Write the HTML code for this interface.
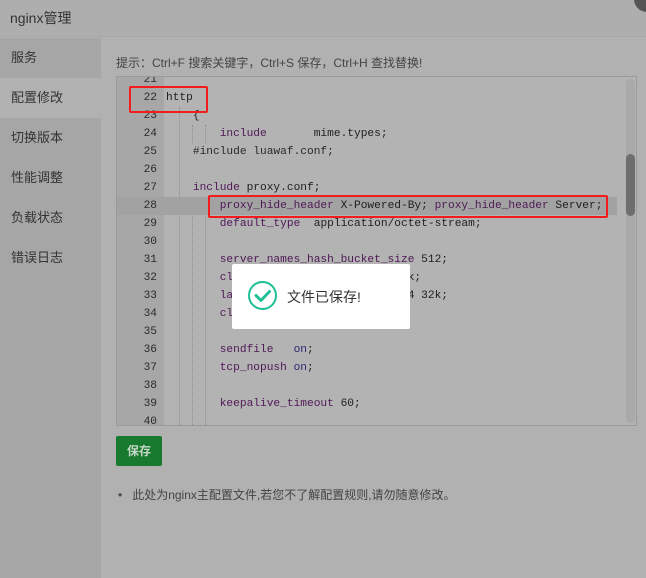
<!DOCTYPE html>
<html><head><meta charset="utf-8"><style>
*{margin:0;padding:0;box-sizing:border-box}
body{width:646px;height:578px;overflow:hidden;background:#b1b1b1;font-family:"Liberation Sans","Noto Sans CJK SC",sans-serif;position:relative;color:#333}
.title{position:absolute;left:0;top:0;width:646px;height:37px;background:#aeaeae;border-bottom:1px solid #a6a6a6;font-size:14px;line-height:36px;padding-left:10px;color:#333}
.close{position:absolute;left:634px;top:-14px;width:26px;height:26px;border-radius:50%;background:#555}
.side{position:absolute;left:0;top:38px;width:101px;height:540px;background:#a6a6a6}
.side div{height:40px;line-height:40px;padding-left:11px;font-size:13px;color:#333}
.side .act{background:#b1b1b1}
.tip{position:absolute;left:116px;top:54px;font-size:12px;color:#444}
.ed{position:absolute;left:116px;top:76px;width:521px;height:350px;border:1px solid #9a9a9a;background:#b3b3b3;overflow:hidden;font-family:"Liberation Mono",monospace;font-size:11.2px}
.gut{position:absolute;left:0;top:0;width:47px;height:100%;background:#a7a7a7}
.ln{position:absolute;left:0;height:18px;line-height:18px;width:100%;white-space:pre;color:#1e1e1e}
.ln .n{display:inline-block;width:40px;text-align:right;color:#2a2a2a;margin-right:9px}
.k{color:#4f1856}.b{color:#2a2a72}.c{color:#2a2a2a}
.hl{background:#a2a2a2}
.g{position:absolute;width:0;border-left:1px dotted #8e8e8e}
.rb{position:absolute;border:2px solid #f21c1c;border-radius:2px}
.sb{position:absolute;left:509px;top:2px;width:9px;height:344px;background:#a9a9a9;border-radius:5px}
.th{position:absolute;left:509px;top:77px;width:9px;height:62px;background:#6e6e6e;border-radius:5px}
.btn{position:absolute;left:116px;top:436px;width:46px;height:30px;background:#177a2e;border-radius:2px;color:#c8d8c8;font-size:12px;font-weight:bold;text-align:center;line-height:30px}
.note{position:absolute;left:118px;top:486px;font-size:12px;color:#444}
.toast{position:absolute;left:232px;top:264px;width:178px;height:65px;background:#fff;border-radius:2px}
.toast span{position:absolute;left:55px;top:23px;font-size:14px;color:#333}
</style></head><body>
<div class="title">nginx管理</div>
<div class="close"></div>
<div class="side"><div>服务</div><div class="act">配置修改</div><div>切换版本</div><div>性能调整</div><div>负载状态</div><div>错误日志</div></div>
<div class="tip">提示：Ctrl+F 搜索关键字，Ctrl+S 保存，Ctrl+H 查找替换!</div>
<div class="ed">
<div class="gut"></div>
<div class="g" style="left:62px;top:30px;height:320px"></div>
<div class="g" style="left:75px;top:48px;height:18px"></div>
<div class="g" style="left:75px;top:120px;height:230px"></div>
<div class="g" style="left:88px;top:48px;height:18px"></div>
<div class="g" style="left:88px;top:120px;height:230px"></div>
<div class="ln" style="top:-6px"><span class="n">21</span></div>
<div class="ln" style="top:12px"><span class="n">22</span>http</div>
<div class="ln" style="top:30px"><span class="n">23</span>    {</div>
<div class="ln" style="top:48px"><span class="n">24</span>        <span class="k">include</span>       mime.types;</div>
<div class="ln" style="top:66px"><span class="n">25</span>    <span class="c">#include luawaf.conf;</span></div>
<div class="ln" style="top:84px"><span class="n">26</span></div>
<div class="ln" style="top:102px"><span class="n">27</span>    <span class="k">include</span> proxy.conf;</div>
<div class="ln hl" style="top:120px;width:500px"><span class="n">28</span>        <span class="k">proxy_hide_header</span> X-Powered-By; <span class="k">proxy_hide_header</span> Server;</div>
<div class="ln" style="top:138px"><span class="n">29</span>        <span class="k">default_type</span>  application/octet-stream;</div>
<div class="ln" style="top:156px"><span class="n">30</span></div>
<div class="ln" style="top:174px"><span class="n">31</span>        <span class="k">server_names_hash_bucket_size</span> 512;</div>
<div class="ln" style="top:192px"><span class="n">32</span>        <span class="k">client_header_buffer_size</span> 32k;</div>
<div class="ln" style="top:210px"><span class="n">33</span>        <span class="k">large_client_header_buffers</span> 4 32k;</div>
<div class="ln" style="top:228px"><span class="n">34</span>        <span class="k">client_max_body_size</span> 50m;</div>
<div class="ln" style="top:246px"><span class="n">35</span></div>
<div class="ln" style="top:264px"><span class="n">36</span>        <span class="k">sendfile</span>   <span class="b">on</span>;</div>
<div class="ln" style="top:282px"><span class="n">37</span>        <span class="k">tcp_nopush</span> <span class="b">on</span>;</div>
<div class="ln" style="top:300px"><span class="n">38</span></div>
<div class="ln" style="top:318px"><span class="n">39</span>        <span class="k">keepalive_timeout</span> 60;</div>
<div class="ln" style="top:336px"><span class="n">40</span></div>
<div class="sb"></div><div class="th"></div>
</div>
<div class="rb" style="left:129px;top:86px;width:79px;height:27px"></div>
<div class="rb" style="left:208px;top:195px;width:400px;height:23px"></div>
<div class="btn">保存</div>
<div class="note">•&nbsp;&nbsp;&nbsp;此处为nginx主配置文件,若您不了解配置规则,请勿随意修改。</div>
<div class="toast">
<svg style="position:absolute;left:15px;top:16px" width="31" height="31" viewBox="0 0 31 31"><circle cx="15.5" cy="15.5" r="13.5" fill="none" stroke="#1fbf98" stroke-width="2"/><path d="M9 15.5l5 5 8.5-9" fill="none" stroke="#1fbf98" stroke-width="3" stroke-linecap="round" stroke-linejoin="round"/></svg>
<span>文件已保存!</span></div>
</body></html>
